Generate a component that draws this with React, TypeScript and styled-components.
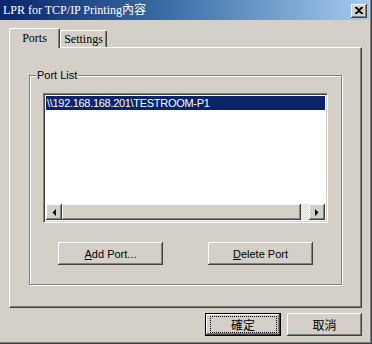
import React from "react";
import styled, { createGlobalStyle, css } from "styled-components";

const Global = createGlobalStyle`
  html, body { margin: 0; padding: 0; background: #d4d0c8; }
  * { box-sizing: border-box; }
`;

const FACE = "#d4d0c8";
const SANS = `"Liberation Sans", Arial, sans-serif`;
const SERIF = `"Liberation Serif", "Noto Sans CJK TC", serif`;
const CJK = `"Noto Sans CJK TC", sans-serif`;

const Window = styled.div`
  width: 372px;
  height: 344px;
  background: ${FACE};
  display: flex;
  flex-direction: column;
  padding: 0 3px 3px 0;
  box-shadow: inset -1px -1px 0 #404040, inset -2px -2px 0 #808080;
  overflow: hidden;
`;

const TitleBar = styled.div`
  height: 20px;
  flex: none;
  background: linear-gradient(to right, #0a246a 0%, #3a6ea5 45%, #a6caf0 100%);
  display: flex;
  align-items: center;
  justify-content: space-between;
  padding: 0 2px 0 3px;
`;

const Title = styled.span`
  color: #fff;
  font-family: ${SERIF};
  font-size: 12px;
  line-height: 14px;
  white-space: nowrap;
`;

const raised = css`
  background: ${FACE};
  box-shadow: inset -1px -1px 0 #404040, inset 1px 1px 0 #fff,
    inset -2px -2px 0 #808080;
`;

const CloseBtn = styled.div`
  ${raised};
  width: 16px;
  height: 14px;
  display: flex;
  align-items: center;
  justify-content: center;
  margin-top: 1px;
`;

const Body = styled.div`
  flex: 1;
  display: flex;
  flex-direction: column;
  padding: 8px 7px 0 9px;
`;

const TabStrip = styled.div`
  display: flex;
  align-items: flex-end;
  height: 19px;
  position: relative;
  z-index: 1;
`;

const Tab = styled.div<{ $active?: boolean }>`
  font-family: ${SERIF};
  font-size: 12px;
  color: #000;
  background: ${FACE};
  border-left: 1px solid #fff;
  border-top: 1px solid #fff;
  border-right: 1px solid #404040;
  box-shadow: inset -1px 0 0 #808080;
  border-radius: 2px 2px 0 0;
  display: flex;
  align-items: flex-start;
  justify-content: center;
  ${(p) =>
    p.$active
      ? css`
          width: 51px;
          height: 20px;
          margin-bottom: -1px;
          padding-top: 2px;
        `
      : css`
          width: 47px;
          height: 17px;
          padding-top: 1px;
        `}
`;

const Panel = styled.div`
  width: 353px;
  height: 261px;
  border-left: 1px solid #fff;
  border-top: 1px solid #fff;
  border-right: 1px solid #404040;
  border-bottom: 1px solid #404040;
  box-shadow: inset -1px -1px 0 #808080;
  padding: 27px 0 0 19px;
`;

const Group = styled.div`
  position: relative;
  width: 313px;
  height: 210px;
  border: 1px solid #808080;
  box-shadow: 1px 1px 0 #fff, inset 1px 1px 0 #fff;
  padding: 17px 0 0 13px;
  display: flex;
  flex-direction: column;
`;

const GroupLabel = styled.span`
  position: absolute;
  top: -8px;
  left: 6px;
  padding: 0 1px;
  background: ${FACE};
  font-family: ${SANS};
  font-size: 11px;
  line-height: 14px;
  color: #000;
`;

const ListBox = styled.div`
  width: 285px;
  height: 130px;
  background: #fff;
  border-top: 1px solid #808080;
  border-left: 1px solid #808080;
  border-right: 1px solid #fff;
  border-bottom: 1px solid #fff;
  box-shadow: inset 1px 1px 0 #404040, inset -1px -1px 0 ${FACE};
  padding: 2px;
  display: flex;
  flex-direction: column;
`;

const ListItems = styled.div`
  flex: 1;
`;

const Row = styled.div<{ $selected?: boolean }>`
  height: 14px;
  padding-left: 1px;
  font-family: ${SANS};
  font-size: 11px;
  line-height: 14px;
  letter-spacing: -0.3px;
  white-space: nowrap;
  color: ${(p) => (p.$selected ? "#fff" : "#000")};
  background: ${(p) => (p.$selected ? "#0a246a" : "transparent")};
`;

const HScroll = styled.div`
  height: 16px;
  display: flex;
`;

const ArrowBtn = styled.div`
  ${raised};
  width: 16px;
  height: 16px;
  flex: none;
  display: flex;
  align-items: center;
  justify-content: center;
`;

const Thumb = styled.div`
  ${raised};
  width: 239px;
  height: 16px;
  flex: none;
`;

const Track = styled.div`
  flex: 1;
  background: repeating-conic-gradient(#fff 0 25%, ${FACE} 0 50%) 0 0 / 2px 2px;
`;

const GroupButtons = styled.div`
  display: flex;
  gap: 45px;
  padding: 19px 0 0 15px;
`;

const Button = styled.div<{ $w: number; $default?: boolean }>`
  width: ${(p) => p.$w}px;
  height: 23px;
  display: flex;
  align-items: center;
  justify-content: center;
  font-family: ${SANS};
  font-size: 11px;
  color: #000;
  background: ${FACE};
  box-shadow: inset -1px -1px 0 #404040, inset 1px 1px 0 #fff,
    inset -2px -2px 0 #808080;
  ${(p) =>
    p.$default &&
    css`
      border: 1px solid #000;
    `}
`;

const CjkLabel = styled.span<{ $focus?: boolean }>`
  font-family: ${CJK};
  font-size: 12px;
  line-height: 14px;
  display: flex;
  align-items: center;
  justify-content: center;
  ${(p) =>
    p.$focus &&
    css`
      width: 65px;
      height: 15px;
      outline: 1px dotted #000;
    `}
`;

const Footer = styled.div`
  display: flex;
  justify-content: flex-end;
  gap: 6px;
  padding: 5px 0 0 0;
`;

const U = styled.span`
  text-decoration: underline;
`;

const Arrow = ({ dir }: { dir: "left" | "right" }) => (
  <svg width="4" height="7" viewBox="0 0 4 7">
    {dir === "left" ? (
      <path d="M4 0 L4 7 L0.5 3.5 Z" fill="#000" />
    ) : (
      <path d="M0 0 L0 7 L3.5 3.5 Z" fill="#000" />
    )}
  </svg>
);

export default function App() {
  return (
    <>
      <Global />
      <Window>
        <TitleBar>
          <Title>LPR for TCP/IP Printing內容</Title>
          <CloseBtn>
            <svg width="8" height="7" viewBox="0 0 8 7">
              <path
                d="M0 0h2l2 2 2-2h2v1L5 3.5 8 6v1H6L4 5 2 7H0V6l3-2.5L0 1z"
                fill="#000"
              />
            </svg>
          </CloseBtn>
        </TitleBar>
        <Body>
          <TabStrip>
            <Tab $active>Ports</Tab>
            <Tab>Settings</Tab>
          </TabStrip>
          <Panel>
            <Group>
              <GroupLabel>Port List</GroupLabel>
              <ListBox>
                <ListItems>
                  <Row $selected>\\192.168.168.201\TESTROOM-P1</Row>
                </ListItems>
                <HScroll>
                  <ArrowBtn>
                    <Arrow dir="left" />
                  </ArrowBtn>
                  <Thumb />
                  <Track />
                  <ArrowBtn>
                    <Arrow dir="right" />
                  </ArrowBtn>
                </HScroll>
              </ListBox>
              <GroupButtons>
                <Button $w={105}>
                  <span>
                    <U>A</U>dd Port...
                  </span>
                </Button>
                <Button $w={105}>
                  <span>
                    <U>D</U>elete Port
                  </span>
                </Button>
              </GroupButtons>
            </Group>
          </Panel>
          <Footer>
            <Button $w={76} $default>
              <CjkLabel $focus>確定</CjkLabel>
            </Button>
            <Button $w={75}>
              <CjkLabel>取消</CjkLabel>
            </Button>
          </Footer>
        </Body>
      </Window>
    </>
  );
}
